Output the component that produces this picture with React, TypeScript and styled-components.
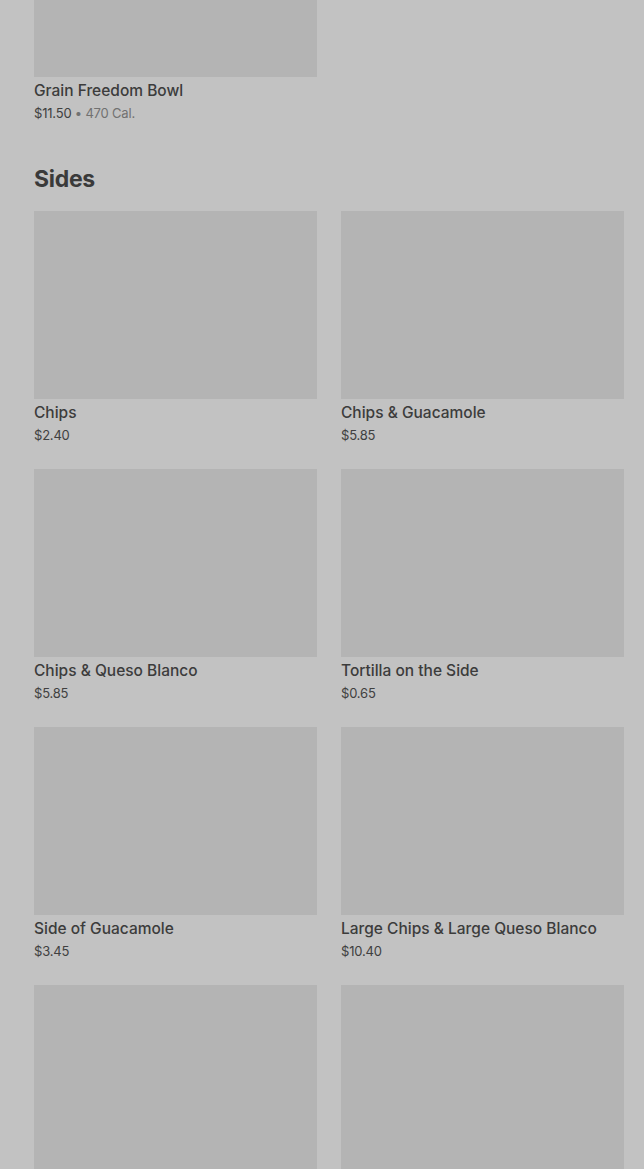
import React from 'react';
import styled, { createGlobalStyle } from 'styled-components';

const GlobalStyle = createGlobalStyle`
  html, body {
    margin: 0;
    padding: 0;
    background: #c2c2c2;
    font-family: Inter, "Liberation Sans", sans-serif;
    overflow: hidden;
  }
`;

// Page wrapper, scrolled so the previous section's last card is cut at the top
const Page = styled.div`
  padding: 0 20px 0 34px;
  margin-top: -111px;
`;

const Section = styled.section`
  margin-bottom: 41px;
`;

const SectionTitle = styled.h2`
  margin: 0 0 16px;
  font-size: 23px;
  line-height: 32px;
  font-weight: 700;
  color: #3a3a3a;
  letter-spacing: -0.3px;
`;

const Grid = styled.div`
  display: grid;
  grid-template-columns: repeat(2, 283px);
  column-gap: 24px;
  row-gap: 25px;
`;

const Card = styled.div`
  display: flex;
  flex-direction: column;
`;

const Thumb = styled.div`
  height: 188px;
  background: #b4b4b4;
`;

const ItemName = styled.div`
  margin-top: 4px;
  font-size: 15.5px;
  line-height: 20px;
  font-weight: 500;
  color: #3c3c3c;
`;

const ItemMeta = styled.div`
  margin-top: 3px;
  font-size: 13px;
  line-height: 18px;
  color: #404040;
  letter-spacing: -0.2px;
`;

const Calories = styled.span`
  color: #717171;
`;

interface Item {
  name: string;
  price: string;
  cal?: string;
}

const sides: Item[] = [
  { name: 'Chips', price: '$2.40' },
  { name: 'Chips & Guacamole', price: '$5.85' },
  { name: 'Chips & Queso Blanco', price: '$5.85' },
  { name: 'Tortilla on the Side', price: '$0.65' },
  { name: 'Side of Guacamole', price: '$3.45' },
  { name: 'Large Chips & Large Queso Blanco', price: '$10.40' },
  { name: 'Side of Queso Blanco', price: '$3.45' },
  { name: 'Large Chips & Large Guacamole', price: '$10.40' },
];

const MenuCard = ({ item }: { item: Item }) => (
  <Card>
    <Thumb />
    <ItemName>{item.name}</ItemName>
    <ItemMeta>
      {item.price}
      {item.cal && <Calories> • {item.cal}</Calories>}
    </ItemMeta>
  </Card>
);

export default function App() {
  return (
    <>
      <GlobalStyle />
      <Page>
        <Section>
          <Grid>
            <MenuCard item={{ name: 'Grain Freedom Bowl', price: '$11.50', cal: '470 Cal.' }} />
          </Grid>
        </Section>
        <Section>
          <SectionTitle>Sides</SectionTitle>
          <Grid>
            {sides.map((s) => (
              <MenuCard key={s.name} item={s} />
            ))}
          </Grid>
        </Section>
      </Page>
    </>
  );
}
